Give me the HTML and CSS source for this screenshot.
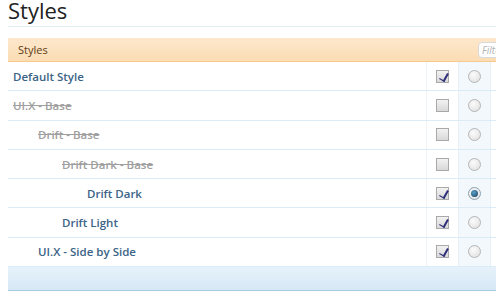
FILE: index.html
```html
<!DOCTYPE html>
<html lang="en">
<head>
    <meta charset="UTF-8">
    <title>Styles</title>
    <link rel="stylesheet" href="styles.css">
</head>
<body>
    <div class="page">
        <h1 class="title">Styles</h1>

        <div class="list">
            <div class="list-head">
                <span class="head-label">Styles</span>
                <input class="filter" type="text" placeholder="Filter Items">
            </div>

            <div class="row">
                <div class="name level-0"><a href="#">Default Style</a></div>
                <div class="cell check"><span class="box checked"></span></div>
                <div class="cell radio"><span class="dot"></span></div>
                <div class="cell extra"></div>
            </div>
            <div class="row">
                <div class="name level-0 off"><a href="#">UI.X - Base</a></div>
                <div class="cell check"><span class="box"></span></div>
                <div class="cell radio"><span class="dot"></span></div>
                <div class="cell extra"></div>
            </div>
            <div class="row">
                <div class="name level-1 off"><a href="#">Drift - Base</a></div>
                <div class="cell check"><span class="box"></span></div>
                <div class="cell radio"><span class="dot"></span></div>
                <div class="cell extra"></div>
            </div>
            <div class="row">
                <div class="name level-2 off"><a href="#">Drift Dark - Base</a></div>
                <div class="cell check"><span class="box"></span></div>
                <div class="cell radio"><span class="dot"></span></div>
                <div class="cell extra"></div>
            </div>
            <div class="row">
                <div class="name level-3"><a href="#">Drift Dark</a></div>
                <div class="cell check"><span class="box checked"></span></div>
                <div class="cell radio"><span class="dot selected"></span></div>
                <div class="cell extra"></div>
            </div>
            <div class="row">
                <div class="name level-2"><a href="#">Drift Light</a></div>
                <div class="cell check"><span class="box checked"></span></div>
                <div class="cell radio"><span class="dot"></span></div>
                <div class="cell extra"></div>
            </div>
            <div class="row">
                <div class="name level-1"><a href="#">UI.X - Side by Side</a></div>
                <div class="cell check"><span class="box checked"></span></div>
                <div class="cell radio"><span class="dot"></span></div>
                <div class="cell extra"></div>
            </div>

            <div class="list-foot"></div>
        </div>
    </div>
</body>
</html>
```

FILE: styles.css
```css
* {
    box-sizing: border-box;
}
html, body {
    margin: 0;
    padding: 0;
    overflow: hidden;
    background: #fff;
}
body {
    font-family: 'Open Sans', 'DejaVu Sans', sans-serif;
    width: 496px;
    height: 300px;
}
.page {
    width: 628px;
    padding-left: 8px;
}
.title {
    margin: 0;
    height: 27px;
    font-size: 22px;
    font-weight: normal;
    line-height: 21px;
    color: #222;
    border-bottom: 1px solid #e4eef5;
}
.list {
    margin-top: 11px;
}
.list-head {
    height: 24px;
    display: flex;
    align-items: center;
    justify-content: space-between;
    padding-left: 10px;
    background: linear-gradient(to bottom, #fde8cc, #fbdcb4);
    border-bottom: 1px solid #f6c98c;
}
.head-label {
    font-size: 11px;
    color: #5c3d14;
}
.filter {
    width: 142px;
    height: 16px;
    margin-right: 8px;
    padding: 0 3px;
    border: 1px solid #d9d9d9;
    border-radius: 4px;
    font: italic 10px 'Open Sans', sans-serif;
    color: #999;
    background: #fff;
}
.filter::placeholder {
    color: #b3b3b3;
}
.row {
    display: flex;
    height: 29.3px;
    border-bottom: 1px solid #dbecf6;
}
.name {
    flex: none;
    width: 419px;
    display: flex;
    align-items: center;
    font-size: 11.5px;
    font-weight: 600;
    border-right: 1px solid #eef4f8;
}
.name a {
    color: #3b6486;
    text-decoration: none;
}
.name.off a {
    color: #a0a0a0;
    text-decoration: line-through;
}
.level-0 { padding-left: 5px; }
.level-1 { padding-left: 30px; }
.level-2 { padding-left: 54px; }
.level-3 { padding-left: 79px; }
.cell {
    flex: none;
    display: flex;
    align-items: center;
    justify-content: center;
}
.check {
    width: 32px;
    border-right: 1px solid #e5f0f7;
}
.radio {
    width: 32px;
    background: #f3f8fc;
    border-right: 1px solid #e5f0f7;
}
.extra {
    flex: 1;
}
.box {
    width: 13px;
    height: 13px;
    border: 1px solid #a9a9a9;
    background: linear-gradient(to bottom, #f2f2f2, #d8d8d8);
    position: relative;
}
.box.checked::after {
    content: "";
    position: absolute;
    left: 4px;
    top: 1px;
    width: 4px;
    height: 8px;
    border-right: 2px solid #2e2d78;
    border-bottom: 1px solid #2e2d78;
    transform: rotate(30deg);
}
.dot {
    width: 13px;
    height: 13px;
    border-radius: 50%;
    border: 1px solid #b5b5b5;
    background: radial-gradient(circle at 40% 35%, #fbfbfb, #dedede);
    position: relative;
}
.dot.selected {
    border-color: #8aa0b0;
}
.dot.selected::after {
    content: "";
    position: absolute;
    left: 2px;
    top: 2px;
    width: 7px;
    height: 7px;
    border-radius: 50%;
    background: radial-gradient(circle at 40% 35%, #5aa0c8, #153e5e);
}
.list-foot {
    height: 24px;
    background: linear-gradient(to bottom, #e6f2fb, #d6e8f5);
    border-bottom: 1px solid #a9cbe2;
}
```
